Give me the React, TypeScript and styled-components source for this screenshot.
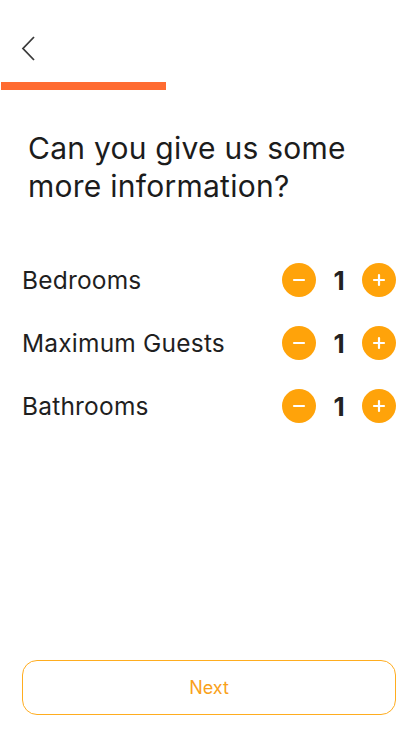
import React from 'react';
import styled, { createGlobalStyle } from 'styled-components';

const GlobalStyle = createGlobalStyle`
  html, body {
    margin: 0;
    padding: 0;
    background: #fff;
  }
  body {
    font-family: Inter, "Liberation Sans", sans-serif;
    color: #1f1f1f;
  }
`;

const Screen = styled.div`
  width: 414px;
  height: 738px;
  display: flex;
  flex-direction: column;
  box-sizing: border-box;
`;

const Header = styled.div`
  height: 82px;
  display: flex;
  align-items: flex-start;
  padding: 34px 0 0 20px;
  box-sizing: border-box;
`;

const BackButton = styled.button`
  background: none;
  border: none;
  padding: 0;
  width: 20px;
  height: 30px;
  cursor: pointer;
`;

const Progress = styled.div`
  height: 8px;
  margin-left: 1px;
  display: flex;
`;

const ProgressFill = styled.div`
  height: 100%;
  background: #ff6b31;
`;

const Title = styled.h1`
  margin: 39px 0 0 28px;
  font-size: 30px;
  line-height: 38px;
  font-weight: 400;
  color: #1c1c1c;
  letter-spacing: 0.25px;
`;

const List = styled.div`
  margin-top: 58px;
  padding: 0 18px 0 22px;
  display: flex;
  flex-direction: column;
  gap: 29px;
`;

const Row = styled.div`
  display: flex;
  align-items: center;
  justify-content: space-between;
  height: 34px;
`;

const Label = styled.span`
  font-size: 24.5px;
  letter-spacing: 0.2px;
  color: #1f1f1f;
`;

const Counter = styled.div`
  display: flex;
  align-items: center;
`;

const RoundButton = styled.button`
  width: 34px;
  height: 34px;
  border-radius: 50%;
  border: none;
  background: #ffa30a;
  display: flex;
  align-items: center;
  justify-content: center;
  padding: 0;
  cursor: pointer;
`;

const Count = styled.span`
  width: 46px;
  text-align: center;
  font-size: 26px;
  font-weight: 700;
  color: #222;
`;

const Spacer = styled.div`
  flex: 1;
`;

const NextButton = styled.button`
  margin: 0 18px 23px 22px;
  height: 55px;
  border: 1.5px solid #ffad1f;
  border-radius: 15px;
  background: #fff;
  color: #f9a11b;
  font-family: Inter, "Liberation Sans", sans-serif;
  font-size: 18px;
  cursor: pointer;
`;

const Minus = () => (
  <svg width="14" height="14" viewBox="0 0 14 14">
    <path d="M2 7h10" stroke="#fff" strokeWidth="2.2" strokeLinecap="round" />
  </svg>
);

const Plus = () => (
  <svg width="14" height="14" viewBox="0 0 14 14">
    <path d="M2 7h10M7 2v10" stroke="#fff" strokeWidth="2.2" strokeLinecap="round" />
  </svg>
);

const fields = ['Bedrooms', 'Maximum Guests', 'Bathrooms'];

export default function App() {
  const [counts, setCounts] = React.useState<number[]>([1, 1, 1]);

  const change = (i: number, d: number) => {
    setCounts(prev => prev.map((c, j) => (j === i ? Math.max(0, c + d) : c)));
  };

  return (
    <>
      <GlobalStyle />
      <Screen>
        <Header>
          <BackButton aria-label="Back">
            <svg width="20" height="30" viewBox="0 0 20 30">
              <path d="M14 3L3 14.5L14 26" fill="none" stroke="#3a3a3a" strokeWidth="1.8" />
            </svg>
          </BackButton>
        </Header>
        <Progress>
          <ProgressFill style={{ width: `${(1 / 2.5) * 100}%` }} />
        </Progress>
        <Title>
          Can you give us some
          <br />
          more information?
        </Title>
        <List>
          {fields.map((f, i) => (
            <Row key={f}>
              <Label>{f}</Label>
              <Counter>
                <RoundButton onClick={() => change(i, -1)}>
                  <Minus />
                </RoundButton>
                <Count>{counts[i]}</Count>
                <RoundButton onClick={() => change(i, 1)}>
                  <Plus />
                </RoundButton>
              </Counter>
            </Row>
          ))}
        </List>
        <Spacer />
        <NextButton>Next</NextButton>
      </Screen>
    </>
  );
}
